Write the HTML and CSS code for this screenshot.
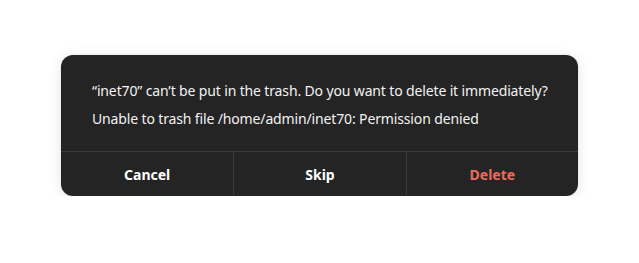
FILE: index.html
```html
<!DOCTYPE html>
<html>
<head>
<meta charset="utf-8">
<link rel="stylesheet" href="styles.css">
</head>
<body>
<div class="page">
  <div class="dialog">
    <div class="message">
      <div class="line">“inet70” can’t be put in the trash. Do you want to delete it immediately?</div>
      <div class="line">Unable to trash file /home/admin/inet70: Permission denied</div>
    </div>
    <div class="actions">
      <div class="btn">Cancel</div>
      <div class="btn">Skip</div>
      <div class="btn destructive">Delete</div>
    </div>
  </div>
</div>
</body>
</html>
```
FILE: styles.css
```css
html, body {
  margin: 0;
  padding: 0;
  background: #ffffff;
}
.page {
  display: flex;
  justify-content: center;
  padding-top: 55px;
  font-family: "Noto Sans", "DejaVu Sans", sans-serif;
}
.dialog {
  width: 517px;
  height: 141px;
  background: #242424;
  border-radius: 12px;
  box-shadow: 0 2px 14px rgba(0,0,0,0.10), 0 0 0 1px rgba(0,0,0,0.03);
  display: flex;
  flex-direction: column;
  overflow: hidden;
}
.message {
  height: 96px;
  box-sizing: border-box;
  padding: 26px 20px 0 31px;
  display: flex;
  flex-direction: column;
  gap: 8px;
  color: #f2f2f2;
  font-size: 14px;
  line-height: 20px;
  letter-spacing: -0.14px;
}
.line {
  white-space: nowrap;
}
.actions {
  flex: 1;
  display: grid;
  grid-template-columns: 1fr 1fr 1fr;
  border-top: 1px solid #3a3a3a;
}
.btn {
  display: flex;
  align-items: center;
  justify-content: center;
  color: #ffffff;
  font-weight: 700;
  font-size: 14px;
}
.btn + .btn {
  border-left: 1px solid #3a3a3a;
}
.destructive {
  color: #ec6a5b;
}
```
